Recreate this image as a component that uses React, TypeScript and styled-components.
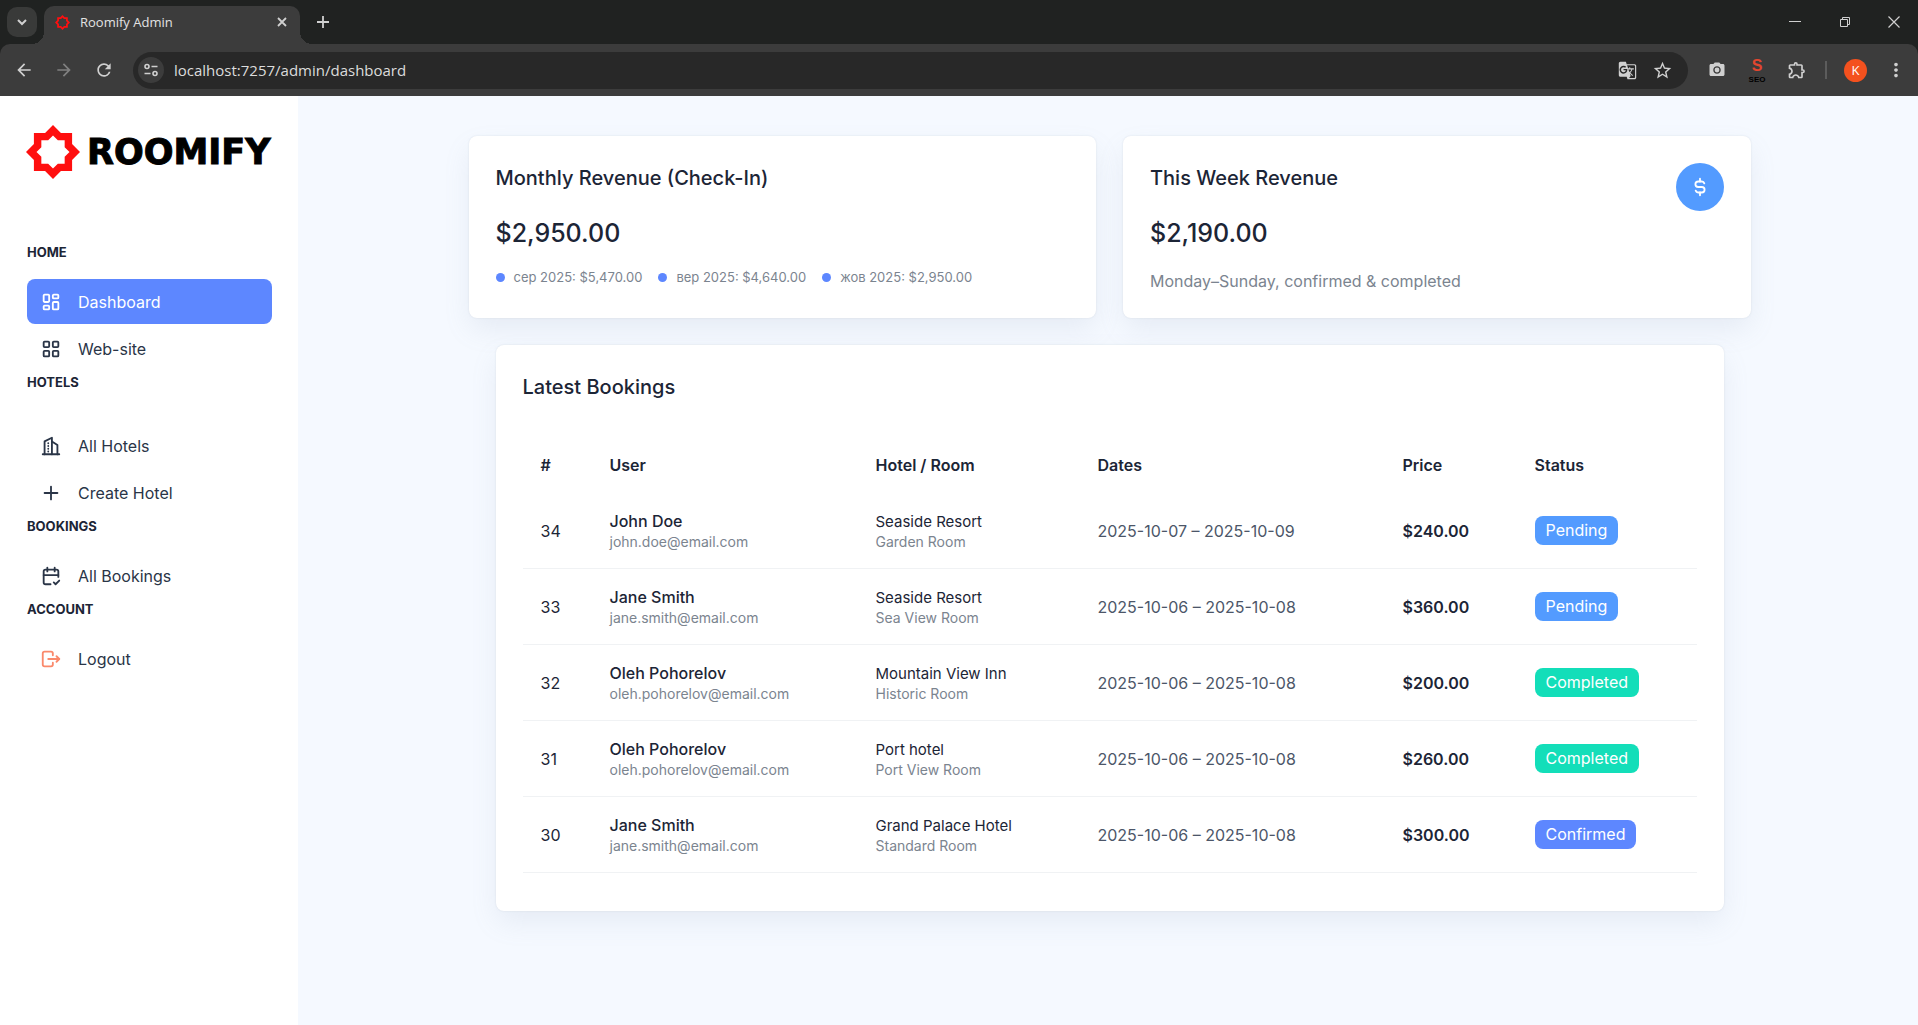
import React from "react";
import styled, { createGlobalStyle } from "styled-components";
import {
  TbLayoutDashboard,
  TbLayoutGrid,
  TbBuildingSkyscraper,
  TbPlus,
  TbCalendarCheck,
  TbLogout,
  TbCurrencyDollar,
} from "react-icons/tb";
import {
  MdArrowBack,
  MdArrowForward,
  MdRefresh,
  MdGTranslate,
  MdStarBorder,
  MdPhotoCamera,
  MdOutlineExtension,
  MdMoreVert,
} from "react-icons/md";

const color = {
  strip: "#202221",
  chrome: "#3c3c3c",
  field: "#282828",
  chromeText: "#e3e3e3",
  page: "#f5f9ff",
  ink: "#1c2536",
  body: "#2a3547",
  muted: "#7b848f",
  primary: "#5d87ff",
  info: "#539bff",
  success: "#13deb9",
  logout: "#fa896b",
  line: "#f0f2f4",
};

const GlobalStyle = createGlobalStyle`
  *, *::before, *::after { box-sizing: border-box; }
  body {
    margin: 0;
    background: ${color.page};
    color: ${color.ink};
    font-family: Inter, "Noto Sans", sans-serif;
    font-size: 16px;
    line-height: 24px;
  }
  h1, h2, h3, p, ul { margin: 0; padding: 0; }
  button, input { font: inherit; }
`;

const Screen = styled.div`
  display: flex;
  flex-direction: column;
  min-height: 100vh;
`;

/* ---------- Browser window ---------- */

const Browser = styled.header`
  background: ${color.strip};
  color: ${color.chromeText};
  font-family: "Open Sans", "Noto Sans", sans-serif;
`;

const TabStrip = styled.div`
  display: flex;
  align-items: center;
  height: 44px;
  padding-left: 7px;
`;

const PlainButton = styled.button<{ $w?: number; $h?: number; $dim?: boolean }>`
  display: flex;
  align-items: center;
  justify-content: center;
  flex: none;
  width: ${(p) => p.$w ?? 32}px;
  height: ${(p) => p.$h ?? 32}px;
  padding: 0;
  border: 0;
  background: none;
  color: ${(p) => (p.$dim ? "#808080" : "#d0d0d0")};
`;

const TabSearch = styled(PlainButton)`
  border-radius: 10px;
  background: #393a39;
`;

const Tab = styled.div`
  position: relative;
  align-self: flex-end;
  display: flex;
  align-items: center;
  width: 256px;
  height: 38px;
  margin-left: 7px;
  padding: 0 4px 6px 11px;
  border-radius: 10px 10px 0 0;
  background: ${color.chrome};
  font-size: 13px;

  &::before,
  &::after {
    content: "";
    position: absolute;
    bottom: 0;
    width: 12px;
    height: 12px;
  }
  &::before {
    right: 100%;
    background: radial-gradient(circle at 0 0, transparent 12px, ${color.chrome} 12px);
  }
  &::after {
    left: 100%;
    background: radial-gradient(circle at 100% 0, transparent 12px, ${color.chrome} 12px);
  }
`;

const TabTitle = styled.span`
  flex: 1;
  margin-left: 10px;
`;

const WindowControls = styled.div`
  display: flex;
  margin-left: auto;
`;

const Toolbar = styled.div`
  display: flex;
  align-items: center;
  height: 52px;
  padding: 0 6px 0 8px;
  border-radius: 10px 10px 0 0;
  background: ${color.chrome};
`;

const NavButtons = styled.div`
  display: flex;
  gap: 8px;
  margin-right: 13px;
`;

const AddressBar = styled.div`
  display: flex;
  flex: 1;
  align-items: center;
  height: 37px;
  padding: 0 9px 0 5px;
  border-radius: 19px;
  background: ${color.field};
`;

const SiteInfo = styled(PlainButton)`
  border-radius: 50%;
  background: ${color.chrome};
`;

const AddressInput = styled.input`
  flex: 1;
  min-width: 0;
  margin-left: 10px;
  padding: 0;
  border: 0;
  outline: 0;
  background: none;
  color: #dcdcdc;
  font-size: 15px;
`;

const Extensions = styled.div`
  display: flex;
  align-items: center;
  gap: 8px;
  margin-left: 13px;
`;

const SeoBadge = styled.span`
  display: flex;
  flex-direction: column;
  align-items: center;
  color: #e2462f;
  font-family: "Liberation Sans", sans-serif;
  font-size: 16px;
  font-weight: 700;
  line-height: 18px;
`;

const SeoWord = styled.span`
  color: #000;
  font-size: 8px;
  line-height: 9px;
`;

const Divider = styled.span`
  width: 2px;
  height: 18px;
  margin: 0 4px;
  background: #5c5c5c;
`;

const Avatar = styled.button`
  width: 23px;
  height: 23px;
  margin: 0 5px;
  padding: 0;
  border: 0;
  border-radius: 50%;
  background: #f4511e;
  color: #fff;
  font-size: 13px;
  line-height: 23px;
`;

/* ---------- Sidebar ---------- */

const Body = styled.div`
  display: flex;
  flex: 1;
`;

const Sidebar = styled.aside`
  flex: none;
  width: 298px;
  padding: 29px 26px 29px 27px;
  background: #fff;
`;

const Brand = styled.a`
  display: flex;
  align-items: center;
  gap: 7px;
  height: 54px;
  margin: 0 0 64px -1px;
  color: #000;
  font-family: "DejaVu Sans", sans-serif;
  font-size: 35px;
  font-weight: 700;
  text-decoration: none;
  -webkit-text-stroke: 1px #000;
`;

const GroupTitle = styled.h2<{ $roomy?: boolean }>`
  margin-bottom: ${(p) => (p.$roomy ? 32 : 18)}px;
  font-size: 13px;
  font-weight: 700;
  line-height: 18px;
`;

const NavList = styled.ul`
  list-style: none;
`;

const NavItem = styled.li`
  margin-bottom: 2px;
`;

const NavLink = styled.a<{ $active?: boolean; $iconColor?: string }>`
  display: flex;
  align-items: center;
  gap: 16px;
  height: 45px;
  padding: 0 13px;
  border-radius: 8px;
  background: ${(p) => (p.$active ? color.primary : "transparent")};
  color: ${(p) => (p.$active ? "#fff" : color.body)};
  text-decoration: none;

  svg {
    color: ${(p) => p.$iconColor ?? "inherit"};
  }
`;

/* ---------- Dashboard ---------- */

const Main = styled.main`
  flex: 1;
  min-width: 0;
  padding: 40px 24px 40px 26px;
`;

const Content = styled.div`
  display: grid;
  gap: 27px;
  max-width: 1281px;
  margin: 0 auto;
`;

const CardRow = styled.div`
  display: grid;
  grid-template-columns: 1fr 1fr;
  gap: 27px;
`;

const Card = styled.section`
  padding: 27px 27px 23px;
  border-radius: 8px;
  background: #fff;
  box-shadow: 0 0 2px rgba(145, 158, 171, 0.24), 0 12px 28px -2px rgba(135, 148, 175, 0.14);
`;

const BookingsCard = styled(Card)`
  margin: 0 27px;
  padding-bottom: 38px;
`;

const CardHead = styled.div`
  display: flex;
  justify-content: space-between;
`;

const CardTitle = styled.h2`
  font-size: 20px;
  font-weight: 500;
  line-height: 30px;
`;

const Amount = styled.h3`
  margin: 22px 0 16px;
  font-size: 25px;
  font-weight: 500;
  line-height: 36px;
`;

const Legend = styled.ul`
  display: flex;
  flex-wrap: wrap;
  gap: 16px;
  list-style: none;
  color: ${color.muted};
  font-size: 13px;
  line-height: 20px;
`;

const LegendItem = styled.li`
  display: flex;
  align-items: center;
  gap: 9px;

  &::before {
    content: "";
    width: 9px;
    height: 9px;
    border-radius: 50%;
    background: ${color.primary};
  }
`;

const Note = styled.p`
  color: ${color.muted};
  line-height: 28px;
`;

const RevenueFigures = styled.div`
  flex: 1;
`;

const RoundIcon = styled.span`
  display: flex;
  align-items: center;
  justify-content: center;
  flex: none;
  width: 48px;
  height: 48px;
  border-radius: 50%;
  background: ${color.info};
  color: #fff;
`;

const BookingTable = styled.table`
  width: 100%;
  margin-top: 35px;
  border-collapse: separate;
  border-spacing: 0;
  table-layout: fixed;
`;

const Col = styled.col<{ $w: number }>`
  width: ${(p) => p.$w}px;
`;

const HeadCell = styled.th`
  height: 56px;
  padding: 0 18px;
  font-weight: 600;
  text-align: left;
`;

const Cell = styled.td<{ $strong?: boolean; $soft?: boolean }>`
  height: 76px;
  padding: 0 18px;
  border-bottom: 1px solid ${color.line};
  color: ${(p) => (p.$soft ? "#4c5668" : color.ink)};
  font-weight: ${(p) => (p.$strong ? 600 : 400)};
  white-space: nowrap;
`;

const Primary = styled.div<{ $strong?: boolean }>`
  font-size: ${(p) => (p.$strong ? 16 : 15)}px;
  font-weight: ${(p) => (p.$strong ? 500 : 400)};
  line-height: 23px;
`;

const Secondary = styled.div`
  color: ${color.muted};
  font-size: 14px;
  line-height: 18px;
`;

const Badge = styled.span<{ $tone: string }>`
  display: inline-block;
  padding: 0 11px;
  border-radius: 8px;
  background: ${(p) => p.$tone};
  color: #fff;
  line-height: 29px;
`;

/* ---------- Drawings ---------- */

const Star = ({ size, inner = 16.5 }: { size: number; inner?: number }) => {
  const ring = (r: number) => {
    const points: string[] = [];
    for (let i = 0; i < 16; i++) {
      const radius = i % 2 === 0 ? r : r * 0.7654;
      const angle = (i * Math.PI) / 8;
      points.push(`${27 + radius * Math.cos(angle)} ${27 + radius * Math.sin(angle)}`);
    }
    return `M${points.join("L")}Z`;
  };
  return (
    <svg width={size} height={size} viewBox="0 0 54 54" aria-hidden="true">
      <path d={ring(27) + ring(inner)} fill="#ff0f0f" fillRule="evenodd" />
    </svg>
  );
};

const Strokes = ({ d, size = 12, width = 2 }: { d: string; size?: number; width?: number }) => (
  <svg width={size} height={size} viewBox="0 0 12 12" fill="none" stroke="currentColor" strokeWidth={width} aria-hidden="true">
    <path d={d} />
  </svg>
);

const TuneIcon = () => (
  <svg width="16" height="16" viewBox="0 0 16 16" fill="none" stroke="currentColor" strokeWidth="1.6" aria-hidden="true">
    <circle cx="4" cy="4.5" r="2" />
    <path d="M8.5 4.5h6M1.5 11.5h6" />
    <circle cx="12" cy="11.5" r="2" />
  </svg>
);

/* ---------- Data ---------- */

const navGroups = [
  {
    title: "HOME",
    items: [
      { label: "Dashboard", Icon: TbLayoutDashboard, active: true },
      { label: "Web-site", Icon: TbLayoutGrid },
    ],
  },
  {
    title: "HOTELS",
    roomy: true,
    items: [
      { label: "All Hotels", Icon: TbBuildingSkyscraper },
      { label: "Create Hotel", Icon: TbPlus },
    ],
  },
  { title: "BOOKINGS", items: [{ label: "All Bookings", Icon: TbCalendarCheck }] },
  { title: "ACCOUNT", items: [{ label: "Logout", Icon: TbLogout, iconColor: color.logout }] },
] as {
  title: string;
  roomy?: boolean;
  items: { label: string; Icon: React.ComponentType<{ size?: number }>; active?: boolean; iconColor?: string }[];
}[];

const months = ["сер 2025: $5,470.00", "вер 2025: $4,640.00", "жов 2025: $2,950.00"];

const columns = [
  { label: "#", width: 69 },
  { label: "User", width: 266 },
  { label: "Hotel / Room", width: 222 },
  { label: "Dates", width: 305 },
  { label: "Price", width: 132 },
  { label: "Status", width: 180 },
];

const tones: Record<string, string> = {
  Pending: color.info,
  Completed: color.success,
  Confirmed: color.primary,
};

const bookings = [
  { id: 34, user: "John Doe", email: "john.doe@email.com", hotel: "Seaside Resort", room: "Garden Room", dates: "2025-10-07 – 2025-10-09", price: "$240.00", status: "Pending" },
  { id: 33, user: "Jane Smith", email: "jane.smith@email.com", hotel: "Seaside Resort", room: "Sea View Room", dates: "2025-10-06 – 2025-10-08", price: "$360.00", status: "Pending" },
  { id: 32, user: "Oleh Pohorelov", email: "oleh.pohorelov@email.com", hotel: "Mountain View Inn", room: "Historic Room", dates: "2025-10-06 – 2025-10-08", price: "$200.00", status: "Completed" },
  { id: 31, user: "Oleh Pohorelov", email: "oleh.pohorelov@email.com", hotel: "Port hotel", room: "Port View Room", dates: "2025-10-06 – 2025-10-08", price: "$260.00", status: "Completed" },
  { id: 30, user: "Jane Smith", email: "jane.smith@email.com", hotel: "Grand Palace Hotel", room: "Standard Room", dates: "2025-10-06 – 2025-10-08", price: "$300.00", status: "Confirmed" },
];

const BrowserChrome = () => (
  <Browser>
    <TabStrip>
      <TabSearch $w={30} $h={30} aria-label="Search tabs">
        <Strokes d="M2 4l4 4 4-4" />
      </TabSearch>
      <Tab>
        <Star size={15} inner={18} />
        <TabTitle>Roomify Admin</TabTitle>
        <PlainButton $w={28} $h={28} aria-label="Close tab">
          <Strokes d="M2 2l8 8M10 2l-8 8" width={1.8} />
        </PlainButton>
      </Tab>
      <PlainButton $w={46} aria-label="New tab">
        <Strokes d="M6 0v12M0 6h12" width={1.8} />
      </PlainButton>
      <WindowControls>
        <PlainButton $w={50} $h={44} aria-label="Minimize">
          <Strokes d="M0 5.5h12" width={1} />
        </PlainButton>
        <PlainButton $w={50} $h={44} aria-label="Restore">
          <Strokes d="M1.5 3.5h7v7h-7zM3.5 3V1.500h7v7H9" width={1} />
        </PlainButton>
        <PlainButton $w={48} $h={44} aria-label="Close window">
          <Strokes d="M.5 .5l11 11M11.500 .5l-11 11" width={1.2} />
        </PlainButton>
      </WindowControls>
    </TabStrip>
    <Toolbar>
      <NavButtons>
        <PlainButton aria-label="Back"><MdArrowBack size={20} /></PlainButton>
        <PlainButton $dim aria-label="Forward"><MdArrowForward size={20} /></PlainButton>
        <PlainButton aria-label="Reload"><MdRefresh size={20} /></PlainButton>
      </NavButtons>
      <AddressBar>
        <SiteInfo $w={26} $h={26} aria-label="Site information"><TuneIcon /></SiteInfo>
        <AddressInput aria-label="Address" defaultValue="localhost:7257/admin/dashboard" />
        <PlainButton $w={36} aria-label="Translate"><MdGTranslate size={19} /></PlainButton>
        <PlainButton $w={34} aria-label="Bookmark"><MdStarBorder size={21} /></PlainButton>
      </AddressBar>
      <Extensions>
        <PlainButton aria-label="Screenshot"><MdPhotoCamera size={18} /></PlainButton>
        <PlainButton aria-label="SEO tools">
          <SeoBadge>
            <span>S</span>
            <SeoWord>SEO</SeoWord>
          </SeoBadge>
        </PlainButton>
        <PlainButton aria-label="Extensions"><MdOutlineExtension size={20} /></PlainButton>
        <Divider />
        <Avatar aria-label="Profile">K</Avatar>
        <PlainButton aria-label="Menu"><MdMoreVert size={22} /></PlainButton>
      </Extensions>
    </Toolbar>
  </Browser>
);

export default function App() {
  return (
    <Screen>
      <GlobalStyle />
      <BrowserChrome />
      <Body>
        <Sidebar>
          <Brand href="#">
            <Star size={54} />
            ROOMIFY
          </Brand>
          <nav>
            {navGroups.map((group) => (
              <section key={group.title}>
                <GroupTitle $roomy={group.roomy}>{group.title}</GroupTitle>
                <NavList>
                  {group.items.map(({ label, Icon, active, iconColor }) => (
                    <NavItem key={label}>
                      <NavLink href="#" $active={active} $iconColor={iconColor}>
                        <Icon size={22} />
                        {label}
                      </NavLink>
                    </NavItem>
                  ))}
                </NavList>
              </section>
            ))}
          </nav>
        </Sidebar>
        <Main>
          <Content>
            <CardRow>
              <Card>
                <CardTitle>Monthly Revenue (Check-In)</CardTitle>
                <Amount>$2,950.00</Amount>
                <Legend>
                  {months.map((month) => (
                    <LegendItem key={month}>{month}</LegendItem>
                  ))}
                </Legend>
              </Card>
              <Card>
                <CardHead>
                  <RevenueFigures>
                    <CardTitle>This Week Revenue</CardTitle>
                    <Amount>$2,190.00</Amount>
                    <Note>Monday–Sunday, confirmed &amp; completed</Note>
                  </RevenueFigures>
                  <RoundIcon><TbCurrencyDollar size={22} /></RoundIcon>
                </CardHead>
              </Card>
            </CardRow>
            <BookingsCard>
              <CardTitle>Latest Bookings</CardTitle>
              <BookingTable>
                <colgroup>
                  {columns.map((c) => <Col key={c.label} $w={c.width} />)}
                </colgroup>
                <thead>
                  <tr>
                    {columns.map((c) => <HeadCell key={c.label} scope="col">{c.label}</HeadCell>)}
                  </tr>
                </thead>
                <tbody>
                  {bookings.map((b) => (
                    <tr key={b.id}>
                      <Cell>{b.id}</Cell>
                      <Cell>
                        <Primary $strong>{b.user}</Primary>
                        <Secondary>{b.email}</Secondary>
                      </Cell>
                      <Cell>
                        <Primary>{b.hotel}</Primary>
                        <Secondary>{b.room}</Secondary>
                      </Cell>
                      <Cell $soft>{b.dates}</Cell>
                      <Cell $strong>{b.price}</Cell>
                      <Cell><Badge $tone={tones[b.status]}>{b.status}</Badge></Cell>
                    </tr>
                  ))}
                </tbody>
              </BookingTable>
            </BookingsCard>
          </Content>
        </Main>
      </Body>
    </Screen>
  );
}
